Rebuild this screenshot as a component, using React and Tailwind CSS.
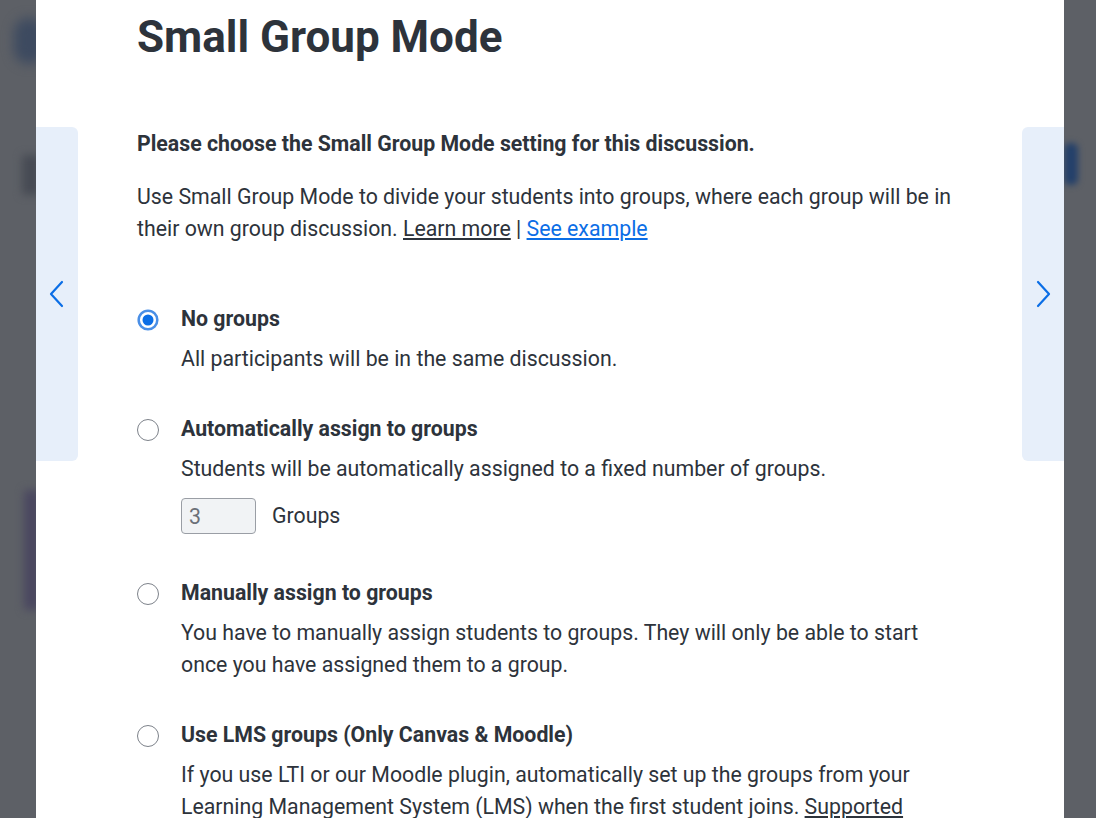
import React, { useState } from 'react'

function Radio({ checked, onClick }) {
  return (
    <button type="button" onClick={onClick} className="mt-[6px] h-[22px] w-[22px] shrink-0 flex items-center justify-center">
      {checked ? (
        <svg width="26" height="26" viewBox="0 0 26 26">
          <circle cx="13" cy="13" r="11" fill="#fff" stroke="#4a8fe6" strokeWidth="3" />
          <circle cx="13" cy="13" r="6.5" fill="#0b6ee6" />
        </svg>
      ) : (
        <span className="block h-[22px] w-[22px] rounded-full border border-[#7d828a] bg-white" />
      )}
    </button>
  )
}

function Chevron({ dir }) {
  return (
    <svg width="18" height="28" viewBox="0 0 18 28" fill="none" stroke="#0b6ee6" strokeWidth="2.2" strokeLinecap="round" strokeLinejoin="round">
      {dir === 'left' ? <path d="M14 2 L3 14 L14 26" /> : <path d="M4 2 L15 14 L4 26" />}
    </svg>
  )
}

const options = [
  {
    id: 'none',
    title: 'No groups',
    desc: 'All participants will be in the same discussion.',
  },
  {
    id: 'auto',
    title: 'Automatically assign to groups',
    desc: 'Students will be automatically assigned to a fixed number of groups.',
  },
  {
    id: 'manual',
    title: 'Manually assign to groups',
    desc: 'You have to manually assign students to groups. They will only be able to start once you have assigned them to a group.',
  },
  {
    id: 'lms',
    title: 'Use LMS groups (Only Canvas & Moodle)',
    desc: 'If you use LTI or our Moodle plugin, automatically set up the groups from your Learning Management System (LMS) when the first student joins.',
  },
]

export default function App() {
  const [mode, setMode] = useState('none')
  const [groups, setGroups] = useState('3')

  return (
    <div className="relative h-[818px] w-full overflow-hidden bg-[#5d6066] font-['Roboto',sans-serif] text-[#2d333b]">
      {/* blurred page behind the overlay */}
      <div className="absolute left-[14px] top-[18px] h-[46px] w-[30px] rounded-full bg-[#3d4a60] blur-[6px]" />
      <div className="absolute left-[22px] top-[155px] h-[40px] w-[18px] rounded bg-[#474b54] blur-[4px]" />
      <div className="absolute left-[24px] top-[490px] h-[120px] w-[16px] rounded bg-[#4a4760] blur-[4px]" />
      <div className="absolute left-[1064px] top-[143px] h-[42px] w-[14px] rounded-md bg-[#24406a] blur-[3px]" />

      <div className="relative ml-[36px] h-full w-[1028px] bg-white px-[101px] pt-[13px]">
        <button type="button" className="absolute left-0 top-[127px] flex h-[334px] w-[42px] items-center justify-center rounded-r-[6px] bg-[#e7effa]">
          <Chevron dir="left" />
        </button>
        <button type="button" className="absolute right-0 top-[127px] flex h-[334px] w-[42px] items-center justify-center rounded-l-[6px] bg-[#e7effa]">
          <Chevron dir="right" />
        </button>

        <h1 className="text-[44px] font-bold leading-[48px]">Small Group Mode</h1>

        <p className="mt-[69px] text-[21.3px] font-bold leading-[28px]">
          Please choose the Small Group Mode setting for this discussion.
        </p>
        <p className="mt-[23px] text-[21.3px] leading-[32px]">
          Use Small Group Mode to divide your students into groups, where each group will be in their own group discussion.{' '}
          <a href="#" className="underline">Learn more</a> |{' '}
          <a href="#" className="text-[#0b6ee6] underline">See example</a>
        </p>

        <div className="mt-[58px] flex flex-col gap-[38px]">
          {options.map((o) => (
            <div key={o.id} className="flex gap-[22px]">
              <Radio checked={mode === o.id} onClick={() => setMode(o.id)} />
              <div className="w-[760px]">
                <div className="text-[21.3px] font-bold leading-[32px]">{o.title}</div>
                <p className="mt-[8px] text-[21.3px] leading-[32px]">
                  {o.desc}
                  {o.id === 'lms' && (
                    <>
                      {' '}
                      <a href="#" className="underline">Supported</a> LMS platforms.
                    </>
                  )}
                </p>
                {o.id === 'auto' && (
                  <div className="mt-[13px] mb-[5px] flex items-center gap-[16px]">
                    <input
                      value={groups}
                      onChange={(e) => setGroups(e.target.value)}
                      className="h-[36px] w-[75px] rounded-[4px] border border-[#9a9ea5] bg-[#f1f3f5] px-[7px] text-[21.3px] text-[#6b7078] outline-none"
                    />
                    <span className="text-[21.3px]">Groups</span>
                  </div>
                )}
              </div>
            </div>
          ))}
        </div>
      </div>
    </div>
  )
}
